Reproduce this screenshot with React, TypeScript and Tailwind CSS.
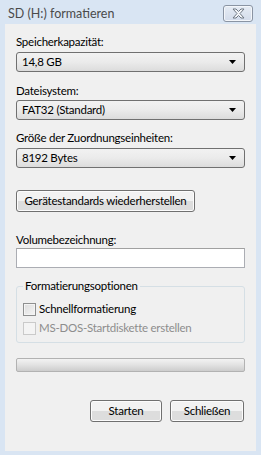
import { ReactNode } from "react";

const font = "font-['Lato','Liberation_Sans',sans-serif] text-[11.5px] leading-[16px] tracking-[-0.25px]";

function Combo({ value }: { value: string }) {
  return (
    <div className="flex h-[20px] items-center justify-between rounded-[3px] border border-[#707070] bg-gradient-to-b from-[#f2f2f2] via-[#ebebeb] to-[#dcdcdc] pl-[5px] pr-[8px] text-black">
      <span>{value}</span>
      <svg width="7" height="4" viewBox="0 0 7 4">
        <path d="M0 0h7L3.5 4z" fill="#000" />
      </svg>
    </div>
  );
}

function Button({ children, className = "" }: { children: ReactNode; className?: string }) {
  return (
    <div
      className={`flex h-[22px] items-center justify-center whitespace-nowrap rounded-[3px] border border-[#707070] bg-gradient-to-b from-[#f2f2f2] from-50% to-[#dddddd] to-50% text-black shadow-[inset_0_0_0_1px_#fcfcfc] ${className}`}
    >
      {children}
    </div>
  );
}

function Check({ label, disabled }: { label: string; disabled?: boolean }) {
  return (
    <div className="flex items-center gap-[3px]">
      <div
        className={`h-[13px] w-[13px] border ${
          disabled ? "border-[#cacaca] bg-[#f4f4f4]" : "border-[#8e8f8f] bg-gradient-to-br from-[#dcdcdc] to-[#f5f5f5] shadow-[inset_0_0_0_1px_#f4f4f4]"
        }`}
      />
      <span className={disabled ? "text-[#8d8d8d]" : "text-black"}>{label}</span>
    </div>
  );
}

export default function App() {
  return (
    <div className={`h-[455px] w-[261px] bg-[#d9e5f3] ${font}`}>
      <div className="flex h-[24px] items-start justify-between pl-[8px] pr-[8px]">
        <span className="mt-[6px] text-[12.5px] tracking-normal text-[#4a4a4a]">SD (H:) formatieren</span>
        <div className="mt-[5px] flex h-[17px] w-[30px] items-center justify-center rounded-[3px] border border-[#8a94a3] bg-gradient-to-b from-[#e6ecf4] to-[#d3dceb] shadow-[inset_0_0_0_1px_#f3f6fa]">
          <svg width="13" height="11" viewBox="0 0 13 11">
            <path
              d="M1 1h3l2.5 2.5L9 1h3L8 5.5 12 10H9L6.5 7.5 4 10H1l4-4.5z"
              fill="#f4f6f9"
              stroke="#6f7884"
              strokeWidth="1"
              strokeLinejoin="round"
            />
          </svg>
        </div>
      </div>

      <div className="mx-[5px] h-[427px] bg-[#f0f0f0] px-[11px] pt-[10px]">
        <div>Speicherkapazität:</div>
        <div className="mt-[2px]">
          <Combo value="14,8 GB" />
        </div>

        <div className="mt-[11px]">Dateisystem:</div>
        <div className="mt-[1px]">
          <Combo value="FAT32 (Standard)" />
        </div>

        <div className="mt-[10px]">Größe der Zuordnungseinheiten:</div>
        <div className="mt-[2px]">
          <Combo value="8192 Bytes" />
        </div>

        <Button className="mt-[22px] w-[179px]">Gerätestandards wiederherstellen</Button>

        <div className="mt-[20px]">Volumebezeichnung:</div>
        <div className="h-[20px] border border-[#abadb3] border-t-[#a0a0a0] bg-white" />

        <div className="relative mt-[18px] h-[57px] rounded-[3px] border border-[#d5dfe5] px-[6px] pt-[14px]">
          <span className="absolute -top-[9px] left-[6px] bg-[#f0f0f0] px-[2px] text-black">Formatierungsoptionen</span>
          <div className="flex flex-col gap-[3px]">
            <Check label="Schnellformatierung" />
            <Check label="MS-DOS-Startdiskette erstellen" disabled />
          </div>
        </div>

        <div className="mt-[15px] h-[14px] rounded-[2px] border border-[#b2b2b2] bg-gradient-to-b from-[#f3f3f3] via-[#e2e2e2] to-[#cdcdcd]" />

        <div className="mt-[28px] flex justify-end gap-[8px] pr-[1px]">
          <Button className="w-[72px]">Starten</Button>
          <Button className="w-[74px]">Schließen</Button>
        </div>
      </div>
    </div>
  );
}
